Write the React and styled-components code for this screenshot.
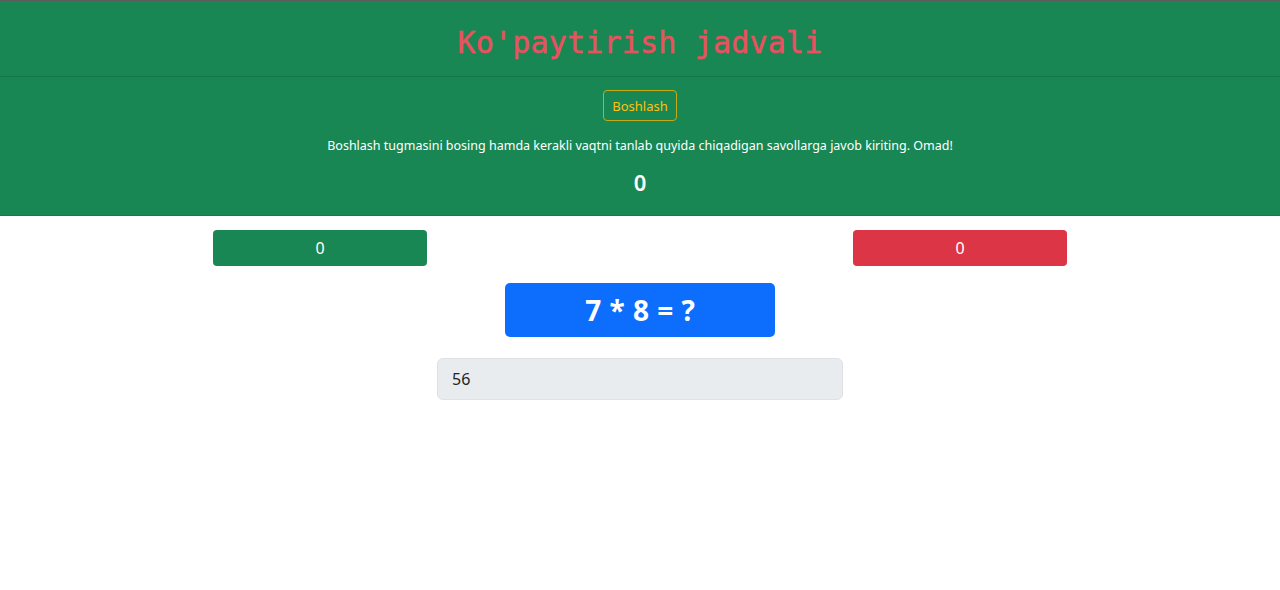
import React from "react";
import styled, { createGlobalStyle } from "styled-components";

const GlobalStyle = createGlobalStyle`
  html, body {
    margin: 0;
    padding: 0;
    background: #fff;
    font-family: "Segoe UI", "Noto Sans", "Liberation Sans", sans-serif;
    color: #212529;
  }
`;

const Card = styled.section`
  background: #198754;
  border-top: 1px solid #5c5c5c;
  border-bottom: 1px solid rgba(0, 0, 0, 0.1);
`;

const CardHeader = styled.header`
  height: 76px;
  box-sizing: border-box;
  padding-top: 8px;
  display: flex;
  align-items: center;
  justify-content: center;
  border-bottom: 1px solid rgba(0, 0, 0, 0.125);
`;

const Title = styled.h1`
  margin: 0;
  font-family: "DejaVu Sans Mono", "Liberation Mono", monospace;
  font-size: 30px;
  font-weight: 400;
  color: #ec5060;
  letter-spacing: 0.2px;
  -webkit-text-stroke: 0.4px #ec5060;
`;

const CardBody = styled.div`
  display: flex;
  flex-direction: column;
  align-items: center;
  padding: 13px 16px 0;
  height: 138px;
  box-sizing: border-box;
`;

const StartButton = styled.button`
  height: 31px;
  padding: 0 8px;
  border: 1px solid #c9a90f;
  border-radius: 4px;
  background: transparent;
  color: #ffc107;
  font-family: inherit;
  font-size: 13px;
  cursor: pointer;
`;

const Hint = styled.p`
  margin: 16px 0 0;
  font-size: 12.5px;
  color: #fff;
`;

const Timer = styled.h4`
  margin: 13px 0 0;
  font-size: 22px;
  font-weight: 600;
  color: #fff;
`;

const ScoreRow = styled.div`
  width: 854px;
  margin: 14px auto 0;
  display: flex;
  justify-content: space-between;
`;

const ScoreBox = styled.div`
  width: 214px;
  height: 36px;
  border-radius: 4px;
  display: flex;
  align-items: center;
  justify-content: center;
  color: #fff;
  font-size: 16px;
  background: ${(p) => (p.$bad ? "#dc3545" : "#198754")};
`;

const Question = styled.div`
  width: 270px;
  height: 54px;
  margin: 17px auto 0;
  border-radius: 5px;
  background: #0d6efd;
  color: #fff;
  display: flex;
  align-items: center;
  justify-content: center;
  font-size: 28px;
  font-weight: 700;
  word-spacing: 1px;
`;

const Answer = styled.input`
  display: block;
  width: 406px;
  height: 42px;
  margin: 21px auto 0;
  box-sizing: border-box;
  padding: 0 14px;
  border: 1px solid #dee2e6;
  border-radius: 6px;
  background: #e9ecef;
  color: #212529;
  font-family: inherit;
  font-size: 16px;
`;

export default function App() {
  return (
    <>
      <GlobalStyle />
      <Card>
        <CardHeader>
          <Title>Ko'paytirish jadvali</Title>
        </CardHeader>
        <CardBody>
          <StartButton>Boshlash</StartButton>
          <Hint>
            Boshlash tugmasini bosing hamda kerakli vaqtni tanlab quyida
            chiqadigan savollarga javob kiriting. Omad!
          </Hint>
          <Timer>0</Timer>
        </CardBody>
      </Card>
      <ScoreRow>
        <ScoreBox>0</ScoreBox>
        <ScoreBox $bad>0</ScoreBox>
      </ScoreRow>
      <Question>7 * 8 = ?</Question>
      <Answer disabled value="56" readOnly />
    </>
  );
}
